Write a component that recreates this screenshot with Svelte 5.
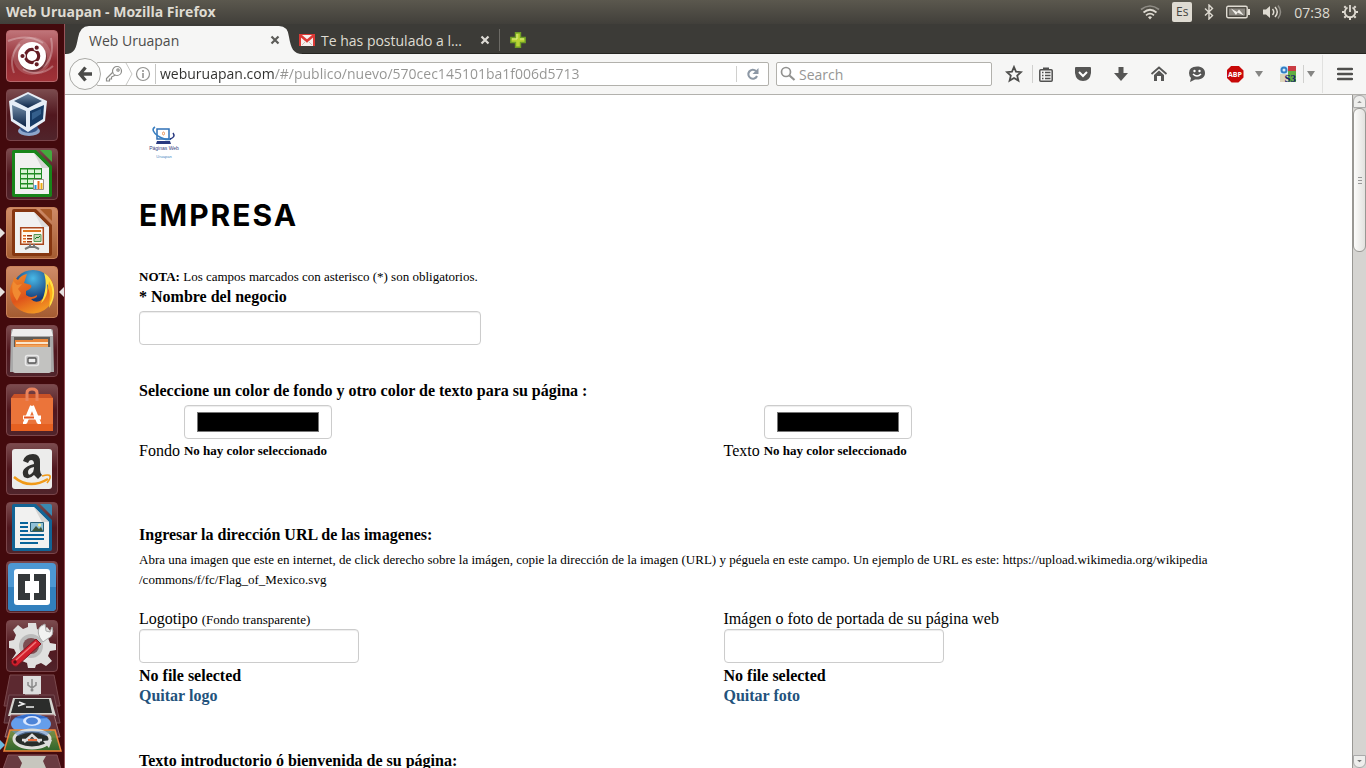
<script>
  let negocio = $state('');
  let direccion = $state('weburuapan.com/#/publico/nuevo/570cec145101ba1f006d5713');
  let busqueda = $state('');
  let fondo = $state('#000000');
  let texto = $state('#000000');
  let logo = $state('');
  let foto = $state('');
</script>

<div class="desktop">
  <header class="panel">
    <span class="title">Web Uruapan - Mozilla Firefox</span>
    <div class="indicators">
      <svg width="20" height="16" viewBox="0 0 20 16" fill="none" stroke="#dfdbd2" stroke-width="1.7">
        <path d="M1 5.5Q10-1.500 19 5.500" stroke="#8f8c85" /><path d="M3.500 8.500Q10 3 16.500 8.500M6 11.300Q10 8 14 11.300" />
        <path d="M8 13.200Q10 11.500 12 13.200L10 15.500z" fill="#dfdbd2" stroke="none" />
      </svg>
      <span class="lang">Es</span>
      <svg class="bt" width="10" height="16" viewBox="0 0 10 16" fill="none" stroke="#dfdbd2" stroke-width="1.4"><path d="M1 4.500L8.500 11.500 5 15V1L8.500 4.500 1 11.500" /></svg>
      <svg class="bat" width="24" height="14" viewBox="0 0 24 14"><rect x=".7" y="1.200" width="20.500" height="11.500" rx="1.500" fill="none" stroke="#dfdbd2" stroke-width="1.400" /><path d="M22 4h2v6h-2z" fill="#dfdbd2" /><path d="M3 3.500h16v7H3z" fill="#8a8780" /><path d="M5 3.500L11 7 13 4.500 18 10.500 11.500 7.500 10 10z" fill="#f0eee9" /></svg>
      <svg width="20" height="16" viewBox="0 0 20 16" fill="none" stroke="#dfdbd2" stroke-width="1.500"><path d="M1 5.500h3L8 2v12L4 10.500H1z" fill="#dfdbd2" stroke="none" /><path d="M10.500 5q2.500 3 0 6M13 3q4.500 5 0 10" /><path d="M16 1.500q5 6.500 0 13" stroke="#8f8c85" /></svg>
      <time>07:38</time>
      <svg width="16" height="16" viewBox="0 0 16 16" fill="none" stroke="#dfdbd2"><path d="M5.500 3.500a5.200 5.200 0 1 0 5 0" stroke-width="1.800" /><path d="M8 1v7" stroke-width="1.800" /><path d="M0 8h2M14 8h2M8 14v2M2.300 2.300l1.500 1.500M13.700 2.300l-1.500 1.500M2.300 13.700l1.500-1.500M13.700 13.700l-1.500-1.500" stroke-width="2" /></svg>
    </div>
  </header>

  <div class="workspace">
    <nav class="launcher" aria-label="Aplicaciones">
      <button class="tile dash" aria-label="Inicio">
        <svg viewBox="0 0 52 52">
          <g fill="none" stroke="#fff" stroke-opacity=".28" stroke-width="2"><path d="M2 11Q22 3 37 13M45 8q4 20-8 29M47 36Q34 48 17 39M8 43Q2 26 14 14" /></g>
          <circle cx="26" cy="26" r="19" fill="#fff" fill-opacity=".17" /><circle cx="27" cy="28" r="14" fill="#44141a" fill-opacity=".5" /><circle cx="26" cy="26" r="14" fill="#fff" />
          <circle cx="26" cy="26" r="6.700" fill="none" stroke="#641c24" stroke-width="3.200" />
          <g stroke="#fff" stroke-width="1.200" fill="#641c24"><circle cx="16.500" cy="26" r="2.700" /><circle cx="30.700" cy="17.700" r="2.700" /><circle cx="30.700" cy="34.300" r="2.700" /></g>
        </svg>
      </button>
      <button class="tile" aria-label="VirtualBox">
        <svg viewBox="0 0 52 52"><defs><linearGradient id="vb" x2="0" y2="1"><stop stop-color="#718ba6" /><stop offset="1" stop-color="#0b2447" /></linearGradient></defs>
          <ellipse cx="23" cy="42" rx="11" ry="5" fill="#8ca5cb" /><ellipse cx="23" cy="39" rx="9" ry="5" fill="#345487" />
          <path d="M22 3L41 12 39 32 22 43 5 32 3 12z" fill="#e6eef7" /><path d="M22 5L36 12 22 19 8 12z" fill="url(#vb)" /><path d="M6 16L20 22V38L7 30z" fill="url(#vb)" /><path d="M24 22L38 16 37 30 24 38z" fill="#173c67" /><path d="M26 24l9-4v5l-9 6z" fill="#345f8c" />
        </svg>
      </button>
      <button class="tile" aria-label="LibreOffice Calc">
        <svg viewBox="0 0 52 52"><path d="M8 2H30L46 18V47q0 2-2 2H8q-2 0-2-2V4q0-2 2-2z" fill="#18851a" /><path d="M34 2h10q2 0 2 2v10z" fill="#44a83e" /><path d="M9 5H28L43 20V46H9z" fill="#f1f1f0" /><path d="M28 5L43 20H36z" fill="#d5d5d3" /><path d="M14 20h22v21H14z" fill="#208b22" /><path d="M15 21.500h6v3.500h-6zM22 21.500h6v3.500h-6zM29 21.500h6v3.500h-6zM15 26.500h6v3.500h-6zM22 26.500h6v3.500h-6zM29 26.500h6v3.500h-6zM15 31.500h6v3.500h-6zM22 31.500h6v3.500h-6zM15 36.500h6v3h-6zM22 36.500h6v3h-6z" fill="#d9f4d4" /><path d="M27.500 31.500h10v10h-10z" fill="#fff" stroke="#9a8d87" /><path d="M28.500 37h2v4h-2z" fill="#2196d8" /><path d="M31.500 33h2v8h-2z" fill="#e86a16" /><path d="M34.500 35h2v6h-2z" fill="#ebad14" /></svg>
      </button>
      <button class="tile orange running" aria-label="LibreOffice Impress">
        <svg viewBox="0 0 52 52"><path d="M8 2H30L46 18V47q0 2-2 2H8q-2 0-2-2V4q0-2 2-2z" fill="#863711" /><path d="M34 2h10q2 0 2 2v10z" fill="#a85928" /><path d="M9 5H28L43 20V46H9z" fill="#f1f1f0" /><path d="M28 5L43 20H36z" fill="#ddd" /><path d="M14.700 20.700h22.600v16.600H14.700z" fill="#fff9ed" stroke="#a8451c" stroke-width="1.500" /><path d="M17 23h18v2H17z" fill="#dc761d" /><path d="M17 28h3v1.500h-3zM17 31h3v1.500h-3zM17 34h3v1.500h-3z" fill="#e0651a" /><path d="M21 28h5v1.500h-5zM21 31h5v1.500h-5zM21 34h5v1.500h-5z" fill="#953611" /><path d="M28 27.500h7v7h-7z" fill="#cad9ba" stroke="#595" /><path d="M29 32l2-2 1 1 2-2" fill="none" stroke="#197b26" /><path d="M19 42l4-2h6l4 2M24 37v3h4v-3" fill="none" stroke="#777" stroke-width="2" /></svg>
      </button>
      <button class="tile orange running focused" aria-label="Firefox">
        <svg viewBox="0 0 52 52"><defs><radialGradient id="blue" cy=".2"><stop stop-color="#49b9e7" /><stop offset="1" stop-color="#153a78" /></radialGradient><linearGradient id="fox" x2=".5" y2="1"><stop stop-color="#ef8c29" /><stop offset=".6" stop-color="#df541b" /><stop offset="1" stop-color="#f19322" /></linearGradient></defs>
          <circle cx="27" cy="25" r="21" fill="url(#blue)" /><path d="M42 10C50 17 51 33 42 41 33 50 19 49 11 42 2 35 3 21 7 16L8 11 12 14Q15 9 21 8L19 14 18 17 25 19Q27 22 20 25L20 29Q25 33 31 29 32 32 25 33 28 37 34 35 44 28 42 10z" fill="url(#fox)" /><path d="M38 7C50 14 51 31 43 42 46 28 43 20 41 18 43 26 39 34 35 37 40 26 41 16 38 7z" fill="#ffe044" /><path d="M43 15q7 12 0 24 2-12-1-17z" fill="#ffad1b" /><path d="M7 15l4 4 5-1-4 5 3 4-4 8Q4 26 7 15z" fill="#f18a31" /></svg>
      </button>
      <button class="tile" aria-label="Archivos">
        <svg viewBox="0 0 52 52"><path d="M5 6q0-2 2-2h38q2 0 2 2l1 41H4z" fill="#a9a9a9" /><path d="M7 4h38l2 7H5z" fill="#ededed" /><path d="M8 12h36v10H8z" fill="#5f5c57" /><path d="M9 15h18v-1h15v9H9z" fill="#e98639" /><path d="M10 17h32v2H10z" fill="#f9e5cb" /><path d="M10 20h32v3H10z" fill="#efa35c" /><path d="M7 22h38v24q0 2-2 2H9q-2 0-2-2z" fill="#c2c2c0" /><rect x="19.500" y="30.500" width="13" height="10" rx="2" fill="#bbb" stroke="#e9e9e9" stroke-width="1.500" /><rect x="22" y="33" width="8" height="5" rx="1" fill="#eee" stroke="#555" stroke-width="1.300" /></svg>
      </button>
      <button class="tile" aria-label="Software">
        <svg viewBox="0 0 52 52"><path d="M5 14l3-4h36l3 4v6H5z" fill="#c95227" /><path d="M5 14h42v33H5z" fill="#eb743a" /><path d="M5 40h42v7H5z" fill="#e56021" /><path d="M21 17V9q0-4 5-4t5 4v8" fill="none" stroke="#e9835d" stroke-width="3" /><path d="M26 22L19 39M26 22l7 17" stroke="#fff" stroke-width="4" /><path d="M17 33.500h18" stroke="#fff" stroke-width="4" /><path d="M18 33.500h10" stroke="#e75721" stroke-width="2" /><path d="M20 39h-3M35 39h-3" stroke="#fff" stroke-width="2" /></svg>
      </button>
      <button class="tile" aria-label="Amazon">
        <svg viewBox="0 0 52 52"><rect x="6" y="6" width="40" height="40" rx="3" fill="#ececeb" /><path d="M17 18Q19 11 27 11q7 0 7 8v8q0 3 2 5l-4 4-4-4q-5 5-10 2-5-9 10-13 0-4-3-4-2 0-3 3z" fill="#30302e" /><path d="M28 24q-6 1-6 5 0 4 3 2 3-2 3-7z" fill="#ececeb" /><path d="M8 34q15 13 34 2" fill="none" stroke="#f19a18" stroke-width="2.500" /><path d="M36 33q7-2 8 0 1 2-3 7" fill="none" stroke="#f19a18" stroke-width="1.700" /></svg>
      </button>
      <button class="tile" aria-label="LibreOffice Writer">
        <svg viewBox="0 0 52 52"><path d="M8 2H30L46 18V47q0 2-2 2H8q-2 0-2-2V4q0-2 2-2z" fill="#126495" /><path d="M34 2h10q2 0 2 2v10z" fill="#3a88b1" /><path d="M9 5H28L43 20V46H9z" fill="#f1f1f0" /><path d="M28 5L43 20H36z" fill="#d5d5d3" /><path d="M14 21h8M14 25h8M14 29h8M14 33h24M14 37h24M14 41h18" stroke="#08649a" stroke-width="2" /><path d="M24.500 20.500h13v9h-13z" fill="#90c1d7" stroke="#266076" /><path d="M26 29l4-5 3 3 2-2 2 4z" fill="#3d563c" /><circle cx="33.500" cy="23" r="1.500" fill="#fff08b" /></svg>
      </button>
      <button class="tile" aria-label="Brackets">
        <svg viewBox="0 0 52 52"><rect x="2" y="2" width="48" height="48" rx="4" fill="#4d98d3" /><path d="M2 26h48v20q0 4-4 4H6q-4 0-4-4z" fill="#3280bd" /><rect x="8" y="8" width="36" height="36" rx="3" fill="#fff" /><path d="M12 13h12v7h-5v12h5v7H12zM40 13H28v7h5v12h-5v7h12z" fill="#34383a" /></svg>
      </button>
      <button class="tile" aria-label="Configuración">
        <svg viewBox="0 0 52 52"><g fill="#e0e0df"><path d="M22 3h8l1 6 5 2 5-4 5 6-4 5 2 5 6 1v6l-6 1-2 5 4 5-6 5-5-3-5 2-1 3h-7l-1-5-5-2-5 3-5-5 4-6-2-4-5-1v-7l5-1 2-5-3-5 5-5 5 4 5-2z" /></g><circle cx="25" cy="26" r="12" fill="#bbb" /><circle cx="25" cy="26" r="8" fill="#7c4e52" /><path d="M34 18q-4-8 1-12l4-2 1 7 4 1 2-5q3 9-5 12l-4 3z" fill="#f2f2f1" stroke="#aaa" /><path d="M30 19l5 5-24 22q-5 1-6-5z" fill="#d11f2c" stroke="#861520" /><path d="M30 22L10 40" stroke="#f1787a" stroke-width="1.500" /><circle cx="9" cy="42" r="1.700" fill="#540f16" /></svg>
      </button>
      <button class="stack" aria-label="Más aplicaciones">
        <svg viewBox="0 0 65 95"><defs><linearGradient id="grass" x2="0" y2="1"><stop stop-color="#7d9f4a" /><stop offset="1" stop-color="#2c7530" /></linearGradient></defs>
          <path d="M10 2h44l6 31H4z" fill="#5c2930" stroke="#79484c" /><path d="M23 3h18v18H23z" fill="#ddd" /><path d="M25 21h14v5H25z" fill="#c4c4c2" /><path d="M27 22h3v2h-3zM34 22h3v2h-3z" fill="#777" /><path d="M32 6v10M28 9v3l4 3 4-3V9" fill="none" stroke="#8b8b8b" stroke-width="1.500" /><circle cx="32" cy="17" r="1.500" fill="#888" />
          <path d="M9 22h45l6 28H4z" fill="#53262e" stroke="#744a50" /><path d="M13 25h38l5 18H8z" fill="#d4d4cf" /><path d="M15 26h34l3 14H11z" fill="#2b2c2b" /><path d="M19 29l5 2-6 2M26 34h8" fill="none" stroke="#eee" stroke-width="1.500" />
          <path d="M11 42h43l6 22H5z" fill="#64333b" stroke="#9b6e72" /><ellipse cx="31" cy="51" rx="20" ry="10" fill="#659eeb" /><path d="M14 45q16-7 35 0L31 46z" fill="#326bca" /><ellipse cx="32" cy="48" rx="9" ry="5" fill="#dbe8ff" /><ellipse cx="32" cy="48" rx="6" ry="3.500" fill="#4d84d7" />
          <path d="M10 57h45l6 21H4z" fill="url(#grass)" fill-opacity=".85" stroke="#ef843a" stroke-width="1.500" /><ellipse cx="32" cy="66" rx="18" ry="9" fill="#282d2a" stroke="#deded9" stroke-width="3" /><path d="M24 69l8-7 8 7M22 67h20" fill="none" stroke="#ddd" stroke-width="2.500" /><path d="M28 67h9" stroke="#e96d3d" stroke-width="2" /><path d="M43 68l9-1-3 8z" fill="#ddd" /><path d="M12 58h40l-6 5q-14-7-28 0z" fill="#6795d7" fill-opacity=".55" />
          <path d="M8 82h49l4 14H3z" fill="#693b41" stroke="#875359" /><path d="M18 83h28l-3 5 3 7H20l2-5z" fill="#c7c6be" /><path d="M0 67l5 5-5 5z" fill="#6db9df" />
        </svg>
      </button>
    </nav>

    <div class="browser">
      <div class="tabs" role="tablist">
        <button class="tab active" role="tab" aria-selected="true">
          <svg class="shape" viewBox="0 0 238 28" preserveAspectRatio="none"><path d="M0 28C10 28 11 22 13 12Q15 0 24 0H214Q223 0 224 11C226 22 228 28 238 28z" fill="#f6f6f5" /></svg>
          <span>Web Uruapan</span>
          <svg class="close" viewBox="0 0 10 10"><path d="M1.500 1.500l7 7M8.500 1.500l-7 7" stroke="#5c5c59" stroke-width="2.200" /></svg>
        </button>
        <button class="tab other" role="tab" aria-selected="false">
          <svg width="16" height="16" viewBox="0 0 16 16"><path d="M0 2h16v12H0z" fill="#dc3a36" /><path d="M2 3h12v11H2z" fill="#f5f0ed" /><path d="M1 3l7 6 7-6" fill="none" stroke="#dc3a36" stroke-width="2.500" /><path d="M3 13l4-4M13 13L9 9" stroke="#cbbfb8" /></svg>
          <span>Te has postulado a l…</span>
          <svg class="close" viewBox="0 0 10 10"><path d="M1.500 1.500l7 7M8.500 1.500l-7 7" stroke="#dedbd5" stroke-width="2.200" /></svg>
        </button>
        <button class="newtab" aria-label="Nueva pestaña"><svg width="16" height="16" viewBox="0 0 16 16"><path d="M5.500.8h5v4.700h4.700v5h-4.700v4.700h-5v-4.700H.8v-5h4.700z" fill="#b8d434" stroke="#6f9e25" stroke-width="1.400" /><path d="M7 2v5H2M14 7h-4" stroke="#e0ee8c" fill="none" /></svg></button>
      </div>

      <div class="toolbar">
        <button class="back" aria-label="Atrás"><svg width="16" height="16" viewBox="0 0 16 16" fill="none" stroke="#4b4b49" stroke-width="3.300"><path d="M8.500 1.500L3 8l5.500 6.500M3 8h12" /></svg></button>
        <div class="address">
          <svg width="18" height="18" viewBox="0 0 18 18" fill="none" stroke="#8d8d8a" stroke-width="1.200"><circle cx="12" cy="6" r="4.500" /><circle cx="13" cy="5" r="1.200" /><path d="M8 7L1.500 13.500V16h3v-2h2v-2l4-2" /></svg>
          <svg width="8" height="22" viewBox="0 0 8 22" fill="none" stroke="#c6c6c4"><path d="M1 0l6 11-6 11" /></svg>
          <svg width="16" height="16" viewBox="0 0 16 16" fill="none" stroke="#939391"><circle cx="8" cy="8" r="6.500" stroke-width="1.200" /><path d="M8 7v5M8 4v2" stroke-width="1.600" /></svg>
          <input class="url" type="text" aria-label="Dirección" bind:value={direccion} />
          <button class="reload" aria-label="Recargar"><svg width="14" height="14" viewBox="0 0 14 14"><path d="M11 9a4.500 4.500 0 1 1-1-5" fill="none" stroke="#8d98a5" stroke-width="2.100" /><path d="M12.500 1v6h-6z" fill="#8d98a5" /></svg></button>
        </div>
        <label class="search"><svg width="16" height="16" viewBox="0 0 16 16" fill="none" stroke="#929290"><circle cx="6" cy="6" r="4.500" stroke-width="1.700" /><path d="M9.500 9.500L14.500 14" stroke-width="2.200" /></svg><input type="text" aria-label="Buscar" placeholder="Search" bind:value={busqueda} /></label>
        <div class="tools">
          <button class="star" aria-label="Marcador"><svg width="18" height="18" viewBox="0 0 18 18"><path d="M9 2l2 4.700 5 .5-3.800 3.400 1.200 5L9 13l-4.400 2.600 1.200-5L2 7.200l5-.5z" fill="none" stroke="#4d4d4b" stroke-width="1.800" /></svg></button>
          <button class="list" aria-label="Lista"><svg width="16" height="16" viewBox="0 0 16 16"><path d="M5 1.500h6V4H5z" fill="#515150" /><rect x="1.800" y="3.800" width="12.400" height="11.400" rx="1" fill="#f6f6f5" stroke="#515150" stroke-width="1.500" /><path d="M4 6.500h1.500M7 6.500h5.500M4 9.500h1.500M7 9.500h5.500M4 12.500h1.500M7 12.500h5.500" stroke="#515150" stroke-width="1.400" /></svg></button>
          <button aria-label="Pocket"><svg width="18" height="18" viewBox="0 0 18 18"><path d="M1 3q0-1 1-1h14q1 0 1 1v5q-1 8-8 8T1 8z" fill="#565655" /><path d="M5 7l4 4 4-4" fill="none" stroke="#fff" stroke-width="2" /></svg></button>
          <button aria-label="Descargas"><svg width="16" height="16" viewBox="0 0 16 16"><path d="M5.500 1h5v6H15l-7 8-7-8h4.500z" fill="#565655" /></svg></button>
          <button aria-label="Página de inicio"><svg width="18" height="18" viewBox="0 0 18 18"><path d="M1.500 9L9 2.500 16.500 9" fill="none" stroke="#565655" stroke-width="1.800" /><path d="M4 10l5-4.500 5 4.500v6h-3v-5H7v5H4z" fill="#565655" /></svg></button>
          <button aria-label="Conversación"><svg width="18" height="18" viewBox="0 0 18 18"><path d="M9 1.500C14 1.500 17 4 17 8s-3 6.500-8 6.500H7L2 17l1-4Q1 11 1 8q0-6.500 8-6.500z" fill="#565655" /><circle cx="6.500" cy="6" r="1.200" fill="#fff" /><circle cx="11.500" cy="6" r="1.200" fill="#fff" /><path d="M5 9q4 4 8 0" fill="none" stroke="#fff" stroke-width="1.500" /></svg></button>
          <button aria-label="Adblock Plus"><span class="abp">ABP</span></button>
          <button class="caret" aria-label="Opciones de bloqueo"><svg width="8" height="6" viewBox="0 0 8 6"><path d="M0 0h8L4 6z" fill="#858583" /></svg></button>
          <button class="s3" aria-label="S3"><svg width="16" height="16" viewBox="0 0 16 16"><path d="M0 0h8v8H0z" fill="#d8edfb" /><path d="M8 0h8v5H8z" fill="#ca3d43" /><path d="M8 5h8v11H8z" fill="#62ad42" /><path d="M0 8h8v8H0z" fill="#ddd5bc" /><circle cx="4" cy="4" r="2.500" fill="none" stroke="#337fc4" stroke-width="2" /></svg><span>S3</span></button>
          <button class="caret split" aria-label="Opciones de S3"><svg width="8" height="6" viewBox="0 0 8 6"><path d="M0 0h8L4 6z" fill="#858583" /></svg></button>
          <button class="menu" aria-label="Menú"><svg width="16" height="14" viewBox="0 0 16 14"><path d="M1 2h14M1 7h14M1 12h14" stroke="#4f4f4d" stroke-width="2.300" stroke-linecap="round" /></svg></button>
        </div>
      </div>

      <div class="viewport">
        <main>
          <svg class="logo" width="50" height="50" viewBox="0 0 50 50" role="img" aria-label="Páginas Web Uruapan">
            <path d="M18 13h12v10H18z" fill="#fff" stroke="#2f70b7" stroke-width="1.500" /><path d="M18 25h13l1 3H17z" fill="#293a80" /><path d="M16 11q-5 3 3 9 8 5 13 3" fill="none" stroke="#397fc0" stroke-width="1.500" /><path d="M31 23q6-2 3-6" fill="none" stroke="#293a80" stroke-width="1.500" /><ellipse cx="24.500" cy="17.500" rx="1" ry="1.500" fill="none" stroke="#e99458" />
            <text x="25" y="34" text-anchor="middle" font-size="5" fill="#343d80">Páginas Web</text><text x="25" y="42" text-anchor="middle" font-size="4" fill="#4989c2">Uruapan</text>
          </svg>
          <h1>EMPRESA</h1>
          <form onsubmit={(event) => event.preventDefault()}>
            <p class="small"><b>NOTA:</b> Los campos marcados con asterisco (*) son obligatorios.</p>
            <section class="business">
              <label class="strong" for="negocio">* Nombre del negocio</label>
              <input id="negocio" class="field wide" type="text" bind:value={negocio} />
            </section>
            <section class="colors">
              <h2>Seleccione un color de fondo y otro color de texto para su página :</h2>
              <div class="columns">
                <div class="color"><label for="fondo">Fondo</label><div><input id="fondo" class="field" type="color" bind:value={fondo} /><b class="small">No hay color seleccionado</b></div></div>
                <div class="color"><label for="texto">Texto</label><div><input id="texto" class="field" type="color" bind:value={texto} /><b class="small">No hay color seleccionado</b></div></div>
              </div>
            </section>
            <section class="images">
              <h2>Ingresar la dirección URL de las imagenes:</h2>
              <p class="small help">Abra una imagen que este en internet, de click derecho sobre la imágen, copie la dirección de la imagen (URL) y péguela en este campo. Un ejemplo de URL es este: https://upload.wikimedia.org/wikipedia<wbr /><span>/commons/f/fc/Flag_of_Mexico.svg</span></p>
              <div class="columns">
                <div class="picture"><label for="logo">Logotipo <span class="small">(Fondo transparente)</span></label><input id="logo" class="field" type="text" bind:value={logo} /><b>No file selected</b><a href="#logo">Quitar logo</a></div>
                <div class="picture"><label for="foto">Imágen o foto de portada de su página web</label><input id="foto" class="field" type="text" bind:value={foto} /><b>No file selected</b><a href="#foto">Quitar foto</a></div>
              </div>
            </section>
            <h2>Texto introductorio ó bienvenida de su página:</h2>
          </form>
        </main>
        <div class="scrollbar" aria-hidden="true">
          <svg class="arrow" viewBox="0 0 14 14"><path d="M4 9l3-3 3 3z" fill="#999" /></svg>
          <div class="thumb"><i></i><i></i><i></i></div>
          <svg class="arrow" viewBox="0 0 14 14"><path d="M4 5l3 3 3-3z" fill="#777" /></svg>
        </div>
      </div>
    </div>
  </div>
</div>

<style>
  :global(body) { margin: 0; }
  * { box-sizing: border-box; }
  button { display: flex; align-items: center; justify-content: center; padding: 0; border: 0; background: none; font: inherit; color: inherit; }
  svg { display: block; flex: none; }
  .desktop { display: flex; flex-direction: column; height: 100vh; overflow: hidden; font-family: "Open Sans", sans-serif; font-size: 14px; }
  .panel { display: flex; flex: none; align-items: center; justify-content: space-between; height: 24px; padding: 0 8px 0 6px; color: #dfdbd2; background: linear-gradient(#5b584e, #413f3a); }
  .title { font-weight: 700; line-height: 22px; }
  .indicators { display: flex; align-items: center; gap: 12px; }
  .lang { width: 20px; height: 20px; border-radius: 2px; background: #dfdbd2; color: #464440; font-size: 12px; line-height: 20px; text-align: center; }
  time { color: #dfdbd2; }
  .workspace { display: flex; flex: 1; min-height: 0; }
  .launcher { display: flex; flex: none; flex-direction: column; align-items: center; gap: 7px; width: 65px; padding-top: 6px; overflow: hidden; background: #430a0d; border-right: 1px solid #97545a; }
  .tile { position: relative; flex: none; width: 52px; height: 52px; border: 1px solid #7a454a; border-radius: 4px; background: linear-gradient(#7b4b4e, #51171e 50%, #50242b); }
  .tile > svg { width: 52px; height: 52px; }
  .tile.dash { border-color: #b8686c; background: linear-gradient(#c07479, #912a31 60%, #a13238); }
  .tile.orange { border-color: #c9825a; background: linear-gradient(#cf8b67, #a45c32); }
  .running::before, .focused::after { content: ""; position: absolute; top: 20px; border: 5px solid transparent; }
  .running::before { left: -7px; border-left-color: #e6e1df; border-right: 0; }
  .focused::after { right: -7px; border-right-color: #e6e1df; border-left: 0; }
  .stack { flex: none; align-self: flex-start; width: 64px; height: 95px; margin-top: -6px; }
  .stack svg { width: 65px; height: 95px; }
  .browser { display: flex; flex: 1; min-width: 0; flex-direction: column; background: #fff; }
  .tabs { display: flex; flex: none; height: 30px; padding-top: 2px; background: #3c3b37; border-bottom: 1px solid #262622; }
  .tab { height: 28px; }
  .tab span { flex: 1; text-align: left; white-space: nowrap; }
  .active { position: relative; width: 234px; padding: 0 19px 0 24px; color: #4c4c4a; }
  .active span, .active .close { position: relative; }
  .shape { position: absolute; inset: 0; width: 238px; height: 28px; }
  .close { width: 10px; height: 10px; }
  .other { width: 201px; padding-right: 9px; gap: 6px; color: #dfdbd2; border-right: 1px solid #6c6a65; height: 22px; margin-top: 3px; }
  .newtab { width: 36px; }
  .toolbar { display: flex; flex: none; align-items: center; height: 41px; padding-left: 4px; background: #f6f6f5; border-bottom: 1px solid #b2b1ad; }
  .back { z-index: 1; width: 32px; height: 32px; flex: none; border: 1px solid #a9a9a5; border-radius: 50%; background: #fafaf9; }
  .address { display: flex; align-items: center; flex: 1; height: 24px; margin-left: -5px; padding-left: 8px; border: 1px solid #b2b1ac; border-radius: 2px; background: #fff; gap: 2px; }
  .url { flex: 1; min-width: 0; height: 20px; padding: 0 0 0 4px; margin-left: 2px; border: 0; color: #7e7e7c; background: linear-gradient(90deg, #30302e 119px, #949492 119px) text; -webkit-text-fill-color: transparent; font: inherit; line-height: 20px; border-left: 1px solid #c6c6c4; }
  .reload { width: 32px; height: 16px; border-left: 1px solid #d0d0ce; }
  .search { display: flex; align-items: center; gap: 3px; width: 216px; height: 24px; margin-left: 7px; padding-left: 3px; border: 1px solid #b2b1ac; border-radius: 2px; background: #fff; }
  .search input { flex: 1; min-width: 0; padding: 0; border: 0; background: none; font: inherit; }
  .search input::placeholder { color: #969694; }
  .tools { display: flex; align-items: center; height: 40px; padding-left: 3px; }
  .tools button { width: 38px; height: 24px; flex: none; }
  .tools .star { width: 37px; }
  .tools .list { width: 26px; margin-right: 6px; height: 18px; border-left: 1px solid #d0d0ce; }
  .abp { width: 17px; height: 17px; color: #fff; background: #c80808; clip-path: polygon(30% 0, 70% 0, 100% 30%, 100% 70%, 70% 100%, 30% 100%, 0 70%, 0 30%); font-size: 7px; font-weight: 700; line-height: 17px; text-align: center; }
  .tools .caret { width: 9px; }
  .tools .s3 { position: relative; width: 35px; margin-left: 7px; }
  .s3 span { position: absolute; right: 9px; bottom: 2px; color: #18236e; font: bold 11px "Liberation Serif", serif; }
  .tools .split { width: 14px; height: 18px; margin-left: -2px; border-left: 1px solid #d0d0ce; }
  .tools .menu { width: 44px; height: 38px; margin-left: 5px; border-left: 1px solid #e1e1df; }
  .viewport { display: flex; flex: 1; min-height: 0; overflow: hidden; }
  main { flex: 1; min-width: 0; padding: 21px 74px 0; color: #000; font: 16px/20px "Liberation Serif", serif; }
  h1, h2, p { margin: 0; }
  .logo { font-family: "Liberation Sans", sans-serif; }
  h1 { margin: 32px 0 35px; font: 700 30px/34px Inter, sans-serif; letter-spacing: 2px; }
  h2, .strong { display: block; font-size: 16px; line-height: 20px; font-weight: 700; }
  .small { font-size: 13px; }
  label .small { line-height: 16px; }
  .field { display: block; width: 220px; height: 34px; padding: 6px 12px; border: 1px solid #ccc; border-radius: 4px; background: #fff; font: inherit; box-shadow: inset 0 1px 1px #00000013; }
  .business { margin-bottom: 36px; }
  .wide { width: 342px; max-width: 100%; margin-top: 4px; }
  .columns { display: grid; grid-template-columns: 1fr 1fr; column-gap: 30px; }
  .colors { margin-bottom: 64px; }
  .colors .columns { margin-top: 4px; }
  .color { display: flex; align-items: flex-end; gap: 4px; }
  .color .field { width: 148px; margin-bottom: 2px; appearance: none; }
  .color .small { display: block; }
  input[type="color"]::-webkit-color-swatch-wrapper { padding: 0; }
  input[type="color"]::-webkit-color-swatch { border: 1px solid #777; border-radius: 0; }
  .help { margin: 5px 0 19px; }
  .help span { white-space: nowrap; }
  .images { margin-bottom: 45px; }
  .picture { display: flex; flex-direction: column; align-items: flex-start; }
  .picture .field { margin-bottom: 3px; }
  a { color: #23527c; font-weight: 700; text-decoration: none; }
  .scrollbar { display: flex; flex: none; flex-direction: column; width: 14px; background: #d5d4d1; border-left: 1px solid #999894; }
  .arrow { width: 13px; height: 13px; background: #eeeeec; border: 1px solid #aaa; border-radius: 6px 6px 0 0; }
  .arrow:last-child { border-radius: 0 0 6px 6px; margin-top: auto; }
  .thumb { display: flex; flex-direction: column; align-items: center; justify-content: center; gap: 2px; width: 13px; height: 144px; border: 1px solid #999894; border-radius: 6px; background: linear-gradient(90deg, #fcfcfb, #e3e2df); }
  .thumb i { width: 4px; height: 1px; background: #999; }
</style>
